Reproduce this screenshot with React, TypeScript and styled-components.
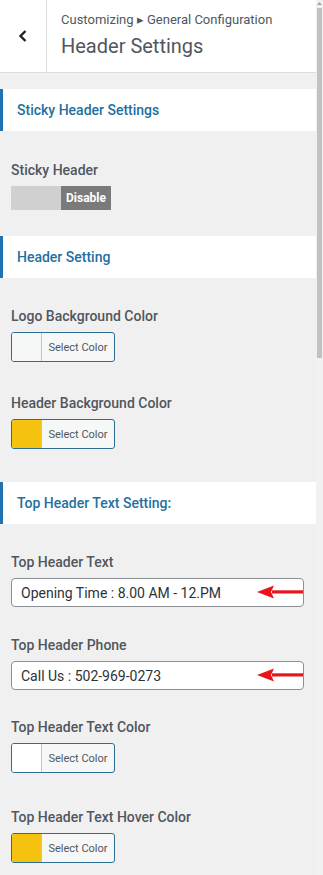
import React from "react";
import styled, { createGlobalStyle } from "styled-components";

const Global = createGlobalStyle`
  html, body { margin: 0; padding: 0; background: #f0f0f1; }
  body { font-family: Roboto, "Noto Sans", "Liberation Sans", sans-serif; }
  * { box-sizing: border-box; }
`;

const Page = styled.div`
  display: flex;
  width: 323px;
  height: 875px;
  overflow: hidden;
  background: #f0f0f1;
`;

const Panel = styled.div`
  width: 316px;
  display: flex;
  flex-direction: column;
`;

const Header = styled.div`
  display: flex;
  height: 73px;
  background: #fff;
  border-bottom: 1px solid #dcdcde;
`;

const BackButton = styled.div`
  width: 47px;
  border-right: 1px solid #dcdcde;
  display: flex;
  align-items: center;
  justify-content: center;
  color: #1d2327;
`;

const TitleBox = styled.div`
  display: flex;
  flex-direction: column;
  padding: 11px 0 0 14px;
`;

const Crumb = styled.div`
  font-size: 13px;
  line-height: 18px;
  color: #50575e;
`;

const Title = styled.div`
  font-size: 20px;
  line-height: 28px;
  margin-top: 3px;
  color: #50575e;
`;

const Section = styled.div<{ $top: number }>`
  margin-top: ${(p) => p.$top}px;
  height: 42px;
  background: #fff;
  border-left: 3px solid #2271b1;
  display: flex;
  align-items: center;
  padding-left: 14px;
  font-size: 14px;
  font-weight: 500;
  color: #23709f;
`;

const Control = styled.div<{ $top: number }>`
  margin-top: ${(p) => p.$top}px;
  padding: 0 12px 0 11px;
  display: flex;
  flex-direction: column;
  align-items: flex-start;
`;

const Label = styled.div`
  font-size: 14px;
  line-height: 20px;
  font-weight: 500;
  color: #50575e;
  margin-bottom: 6px;
`;

const Toggle = styled.div`
  display: flex;
  height: 24px;
  width: 100px;
`;

const ToggleOff = styled.div`
  flex: 1;
  background: #d0d0d0;
`;

const ToggleOn = styled.div`
  flex: 1;
  background: #7a7a7a;
  color: #fff;
  font-size: 12px;
  font-weight: 700;
  display: flex;
  align-items: center;
  justify-content: center;
`;

const ColorButton = styled.div`
  display: flex;
  width: 104px;
  height: 30px;
  border: 1px solid #2c6d94;
  border-radius: 3px;
  overflow: hidden;
  background: #f6f7f7;
`;

const Swatch = styled.div<{ $color: string }>`
  width: 30px;
  background: ${(p) => p.$color};
  border-right: 1px solid #c3c4c7;
`;

const ColorText = styled.div`
  flex: 1;
  display: flex;
  align-items: center;
  justify-content: center;
  font-size: 11px;
  color: #50575e;
`;

const InputWrap = styled.div`
  position: relative;
  width: 293px;
`;

const Input = styled.div`
  height: 29px;
  border: 1px solid #8c8f94;
  border-radius: 4px;
  background: #fff;
  display: flex;
  align-items: center;
  padding-left: 9px;
  font-size: 14px;
  color: #2c3338;
`;

const Arrow = styled.svg`
  position: absolute;
  left: 245px;
  top: 6px;
`;

const ScrollBar = styled.div`
  width: 7px;
  background: #f1f1f1;
  display: flex;
  flex-direction: column;
  align-items: center;
  padding-top: 1px;
`;

const Thumb = styled.div`
  margin-top: 2px;
  width: 5px;
  height: 350px;
  background: #c1c1c1;
`;

function RedArrow() {
  return (
    <Arrow width="48" height="16" viewBox="0 0 48 16">
      <path d="M16 6.3 H47 V9.5 H16 Z" fill="#e8141a" />
      <path d="M1 8 L18 1.5 L15 8 L18 14.5 Z" fill="#e8141a" />
    </Arrow>
  );
}

function ColorPick({ color }: { color: string }) {
  return (
    <ColorButton>
      <Swatch $color={color} />
      <ColorText>Select Color</ColorText>
    </ColorButton>
  );
}

export default function App() {
  return (
    <Page>
      <Global />
      <Panel>
        <Header>
          <BackButton>
            <svg width="10" height="14" viewBox="0 0 10 14">
              <polyline points="7.5,2 2.5,7 7.5,12" fill="none" stroke="#1d2327" strokeWidth="2.4" />
            </svg>
          </BackButton>
          <TitleBox>
            <Crumb>Customizing ▸ General Configuration</Crumb>
            <Title>Header Settings</Title>
          </TitleBox>
        </Header>

        <Section $top={16}>Sticky Header Settings</Section>
        <Control $top={29}>
          <Label>Sticky Header</Label>
          <Toggle>
            <ToggleOff />
            <ToggleOn>Disable</ToggleOn>
          </Toggle>
        </Control>

        <Section $top={26}>Header Setting</Section>
        <Control $top={28}>
          <Label>Logo Background Color</Label>
          <ColorPick color="#f6f7f7" />
        </Control>
        <Control $top={31}>
          <Label>Header Background Color</Label>
          <ColorPick color="#f5c20f" />
        </Control>

        <Section $top={33}>Top Header Text Setting:</Section>
        <Control $top={28}>
          <Label>Top Header Text</Label>
          <InputWrap>
            <Input>Opening Time : 8.00 AM - 12.PM</Input>
            <RedArrow />
          </InputWrap>
        </Control>
        <Control $top={28}>
          <Label>Top Header Phone</Label>
          <InputWrap>
            <Input>Call Us : 502-969-0273</Input>
            <RedArrow />
          </InputWrap>
        </Control>
        <Control $top={27}>
          <Label>Top Header Text Color</Label>
          <ColorPick color="#ffffff" />
        </Control>
        <Control $top={34}>
          <Label>Top Header Text Hover Color</Label>
          <ColorPick color="#f5c20f" />
        </Control>
      </Panel>
      <ScrollBar>
        <svg width="5" height="5" viewBox="0 0 5 5">
          <path d="M0 4 L2.5 1 L5 4 Z" fill="#a3a3a3" />
        </svg>
        <Thumb />
      </ScrollBar>
    </Page>
  );
}
